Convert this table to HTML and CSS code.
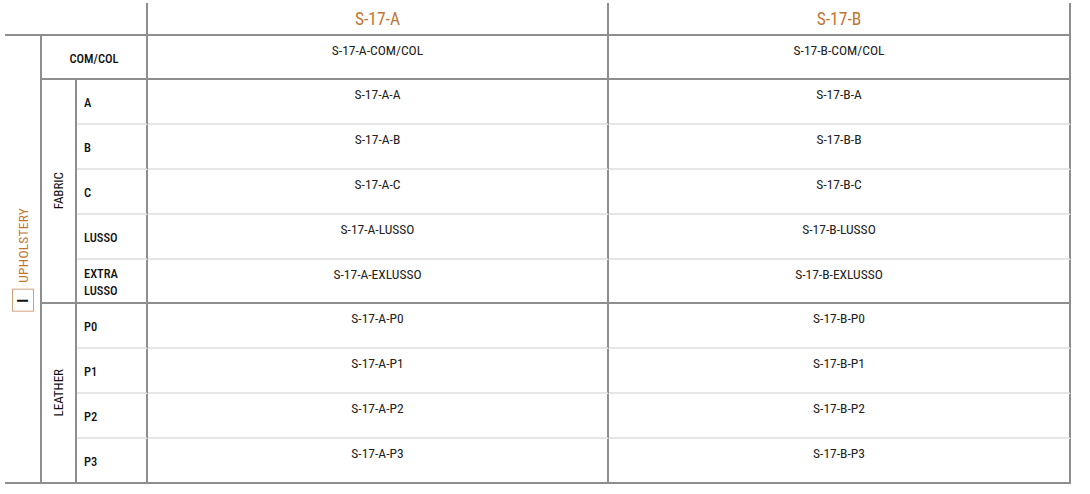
FILE: index.html
```html
<!DOCTYPE html>
<html>
<head>
<meta charset="utf-8">
<link rel="stylesheet" href="styles.css">
</head>
<body>
<div class="sheet">
  <div class="corner"></div>
  <div class="head">S-17-A</div>
  <div class="head">S-17-B</div>

  <div class="section">
    <div class="section-label"><span class="badge">I</span><span class="section-text">UPHOLSTERY</span></div>
  </div>
  <div class="label com">COM/COL</div>
  <div class="val dark">S-17-A-COM/COL</div>
  <div class="val dark">S-17-B-COM/COL</div>

  <div class="group fabric"><span class="group-text">FABRIC</span></div>
  <div class="label">A</div>
  <div class="val">S-17-A-A</div>
  <div class="val">S-17-B-A</div>
  <div class="label">B</div>
  <div class="val">S-17-A-B</div>
  <div class="val">S-17-B-B</div>
  <div class="label">C</div>
  <div class="val">S-17-A-C</div>
  <div class="val">S-17-B-C</div>
  <div class="label">LUSSO</div>
  <div class="val">S-17-A-LUSSO</div>
  <div class="val">S-17-B-LUSSO</div>
  <div class="label dark">EXTRA<br>LUSSO</div>
  <div class="val dark">S-17-A-EXLUSSO</div>
  <div class="val dark">S-17-B-EXLUSSO</div>

  <div class="group leather"><span class="group-text">LEATHER</span></div>
  <div class="label">P0</div>
  <div class="val">S-17-A-P0</div>
  <div class="val">S-17-B-P0</div>
  <div class="label">P1</div>
  <div class="val">S-17-A-P1</div>
  <div class="val">S-17-B-P1</div>
  <div class="label">P2</div>
  <div class="val">S-17-A-P2</div>
  <div class="val">S-17-B-P2</div>
  <div class="label dark">P3</div>
  <div class="val dark">S-17-A-P3</div>
  <div class="val dark">S-17-B-P3</div>
</div>
</body>
</html>
```
FILE: styles.css
```css
html, body {
  background: #ffffff;
}
body {
  margin: 3px 0 0 5px;
  font-family: "Liberation Sans Narrow", "Roboto Condensed", "DejaVu Sans Condensed", "Liberation Sans", sans-serif;
  font-stretch: condensed;
  color: #1e1e1e;
}
.sheet {
  display: grid;
  width: 1066px;
  grid-template-columns: 37px 35px 71px 461px 462px;
  grid-template-rows: 33px 44px 45px 45px 45px 45px 44px 45px 45px 45px 45px;
}
.corner {
  grid-column: span 3;
  border-bottom: 2px solid #8e8e8e;
  border-right: 2px solid #8e8e8e;
}
.head {
  border-bottom: 2px solid #8e8e8e;
  border-right: 2px solid #8e8e8e;
  display: flex;
  align-items: center;
  justify-content: center;
  color: #bf7634;
  font-size: 17.5px;
  padding-top: 1px;
}
.section {
  grid-row: span 10;
  border-right: 2px solid #8e8e8e;
  border-bottom: 2px solid #8e8e8e;
  display: flex;
  align-items: center;
  justify-content: center;
  padding-top: 2px;
}
.section-label {
  writing-mode: vertical-rl;
  transform: rotate(180deg);
  display: flex;
  align-items: center;
  gap: 6px;
}
.section-text {
  color: #bf7634;
  font-size: 13.5px;
  letter-spacing: 0.2px;
}
.badge {
  width: 20px;
  height: 21px;
  border: 1px solid #cfa27a;
  display: flex;
  align-items: center;
  justify-content: center;
  color: #111;
  font-weight: bold;
  font-size: 15px;
  line-height: 1;
}
.group {
  border-right: 2px solid #8e8e8e;
  border-bottom: 2px solid #8e8e8e;
  display: flex;
  align-items: center;
  justify-content: center;
}
.fabric { grid-row: span 5; }
.leather { grid-row: span 4; }
.group-text {
  writing-mode: vertical-rl;
  transform: rotate(180deg);
  font-size: 13px;
  color: #111;
}
.label {
  border-right: 2px solid #8e8e8e;
  border-bottom: 2px solid #e6e6e6;
  display: flex;
  align-items: center;
  padding-left: 7px;
  padding-top: 2px;
  font-size: 12.5px;
  line-height: 17px;
  color: #111;
  font-weight: 500;
}
.label.com {
  grid-column: span 2;
  justify-content: center;
  padding-left: 0;
}
.val {
  border-right: 2px solid #8e8e8e;
  border-bottom: 2px solid #e6e6e6;
  text-align: center;
  font-size: 13.5px;
  line-height: 15px;
  padding-top: 7px;
  color: #222;
}
.label.dark, .val.dark, .label.com {
  border-bottom-color: #8e8e8e;
}
```
